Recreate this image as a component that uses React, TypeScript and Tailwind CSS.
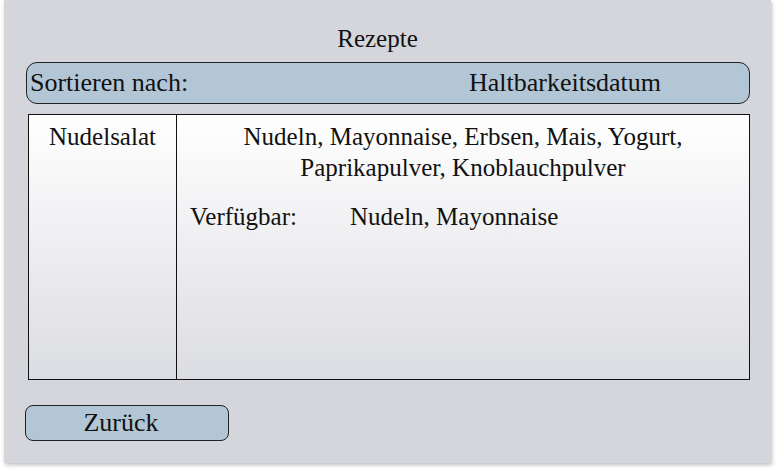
import React from 'react';

const App: React.FC = () => {
  return (
    <div className="w-[776px] h-[472px] bg-white overflow-hidden font-['Liberation_Serif','DejaVu_Serif',serif]">
      <div className="ml-[4px] w-[767px] h-[463px] bg-[#d5d6db] shadow-[1px_2px_4px_rgba(0,0,0,0.25)] flex flex-col text-[#111]">
        <h1 className="h-[62px] pt-[26px] pr-[20px] text-center text-[25px] leading-[26px]">Rezepte</h1>

        {/* sort bar */}
        <div className="ml-[22px] w-[724px] h-[42px] bg-[#b3c6d5] border border-[#222] rounded-[11px] flex items-center text-[26px] leading-none">
          <span className="pl-[3px]">Sortieren nach:</span>
          <span className="ml-auto mr-[88px]">Haltbarkeitsdatum</span>
        </div>

        {/* recipe table */}
        <div className="mt-[10px] ml-[24px] w-[722px] h-[266px] border border-[#111] flex bg-gradient-to-b from-white to-[#dcdde2] text-[25px] leading-[31px]">
          <div className="w-[148px] border-r border-[#111] pt-[6px] text-center">
            Nudelsalat
          </div>
          <div className="flex-1 flex flex-col pt-[6px]">
            <p className="text-center">
              Nudeln, Mayonnaise, Erbsen, Mais, Yogurt,
              <br />
              Paprikapulver, Knoblauchpulver
            </p>
            <div className="flex mt-[18px] pl-[13px]">
              <span className="w-[160px]">Verfügbar:</span>
              <span>Nudeln, Mayonnaise</span>
            </div>
          </div>
        </div>

        <button className="mt-[25px] ml-[21px] w-[204px] h-[36px] pr-[12px] bg-[#b3c6d5] border border-[#222] rounded-[8px] text-[26px] leading-none">
          Zurück
        </button>
      </div>
    </div>
  );
};

export default App;
